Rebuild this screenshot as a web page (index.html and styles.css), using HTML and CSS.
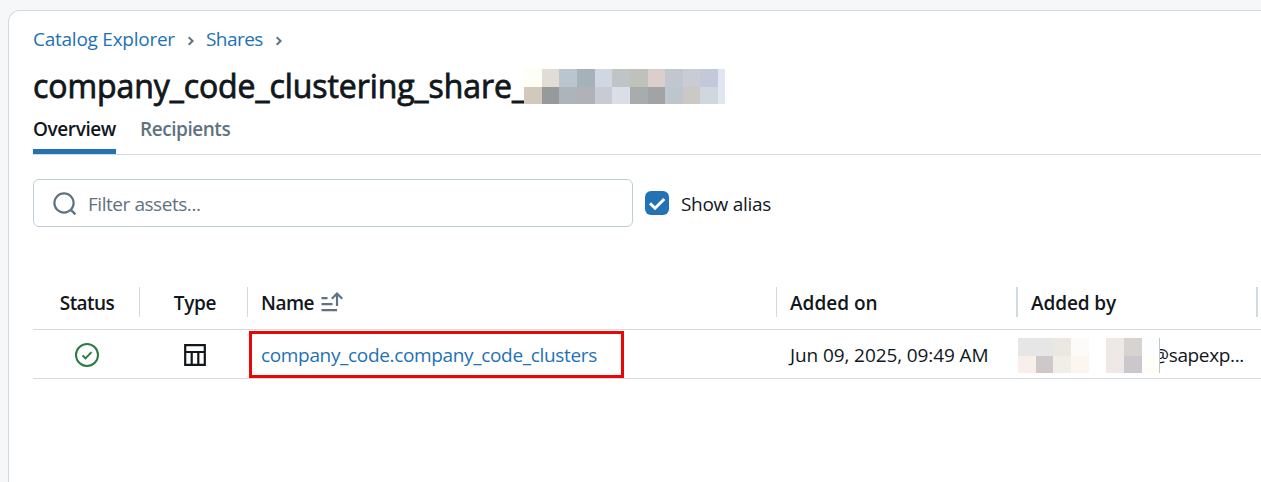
FILE: index.html
```html
<!DOCTYPE html>
<html lang="en">
<head>
<meta charset="utf-8">
<title>Catalog Explorer</title>
<link rel="stylesheet" href="styles.css">
</head>
<body>
<main class="panel">
  <nav class="crumbs">
    <a class="crumb-root">Catalog Explorer</a>
    <svg class="chev" width="8" height="10" viewBox="0 0 8 10"><path d="M1.7 1.2 5.6 5 1.7 8.8"/></svg>
    <a class="crumb-shares">Shares</a>
    <svg class="chev" width="8" height="10" viewBox="0 0 8 10"><path d="M1.7 1.2 5.6 5 1.7 8.8"/></svg>
  </nav>
  <header class="title-row">
    <h1>company_code_clustering_share_</h1>
    <div class="mosaic mosaic-title">
      <i class="c1"></i><i class="c2"></i><i class="c3"></i><i class="c4"></i><i class="c5"></i><i class="c6"></i><i class="c7"></i><i class="c8"></i><i class="c9"></i><i class="c10"></i><i class="c11"></i><i class="c12"></i>
      <i class="d1"></i><i class="d2"></i><i class="d3"></i><i class="d4"></i><i class="d5"></i><i class="d6"></i><i class="d7"></i><i class="d8"></i><i class="d9"></i><i class="d10"></i><i class="d11"></i><i class="c12"></i>
    </div>
  </header>
  <div class="tabs">
    <div class="tab active"><span>Overview</span></div>
    <div class="tab recipients"><span>Recipients</span></div>
  </div>
  <div class="filters">
    <div class="search">
      <svg width="26" height="26" viewBox="0 0 26 26"><circle cx="12" cy="12" r="9.6"/><path d="m18.6 18.6 4.8 4.8"/></svg>
      <span class="placeholder">Filter assets...</span>
    </div>
    <div class="checkbox"><svg width="24" height="24" viewBox="0 0 24 24"><path d="m5 12.2 5 5L19.3 8"/></svg></div>
    <span class="alias">Show alias</span>
  </div>
  <section class="table">
    <div class="row head">
      <div class="cell center"><span class="h-status">Status</span></div>
      <div class="cell center"><span class="h-type">Type</span></div>
      <div class="cell name"><span class="h-name">Name</span>
        <svg class="sort" width="24" height="20" viewBox="0 0 24 20"><path d="M1.5 6.2h6M1.5 12.2h11M1.5 18.2h15.5M17 14V2M11.8 6.7 17 1.5l5.2 5.2"/></svg>
      </div>
      <div class="cell"><span class="h-on">Added on</span></div>
      <div class="cell"><span class="h-by">Added by</span></div>
      <div class="cell"></div>
    </div>
    <div class="row body">
      <div class="cell center"><svg class="ok" width="26" height="26" viewBox="0 0 26 26"><circle cx="13" cy="13" r="11"/><path d="m8.5 13.4 3 3 6-6.3"/></svg></div>
      <div class="cell center type"><svg class="grid" width="22" height="22" viewBox="0 0 22 22"><path d="M1.2 1.2h19.6v19.6H1.2zM1.2 8h19.6M7.7 8v12.8M14.3 8v12.8"/></svg></div>
      <div class="cell name"><a class="asset">company_code.company_code_clusters</a><div class="highlight"></div></div>
      <div class="cell"><span class="date">Jun 09, 2025, 09:49 AM</span></div>
      <div class="cell user">
        <div class="mosaic mosaic-user">
          <i class="u1"></i><i class="u1"></i><i class="u3"></i><i class="u4"></i><i></i><i class="u5"></i><i class="u6"></i><i class="u7"></i>
          <i class="v1"></i><i class="v2"></i><i class="v3"></i><i class="v4"></i><i></i><i class="u5"></i><i class="v6"></i><i class="v7"></i>
        </div>
        <span class="mail">@sapexp...</span>
      </div>
    </div>
  </section>
</main>
</body>
</html>
```
FILE: styles.css
```css
* { box-sizing: border-box; }
body {
  margin: 0;
  padding: 10px 0 0 8px;
  height: 482px;
  overflow: hidden;
  background: #f6f7f9;
  color: #11171c;
  font: 19px/26px "Open Sans", "Noto Sans", sans-serif;
}
h1 { margin: 0; }
span, a, h1 { white-space: nowrap; }
svg { display: block; flex: none; fill: none; }
.panel {
  height: 490px;
  border: 1px solid #d1d9e1;
  border-right: 0;
  border-radius: 12px 0 0 0;
  background: #fff;
  padding: 15px 0 0 24px;
}
.crumbs { display: flex; height: 26px; align-items: center; color: #2272b4; }
.crumb-root { width: 142px; letter-spacing: -0.25px; }
.crumb-shares { width: 57px; letter-spacing: -0.55px; }
.chev { margin: 3px 11px 0 12px; stroke: #5f7281; stroke-width: 2; }
.title-row { display: flex; height: 35px; margin-top: 17px; }
h1 {
  width: 491px; font-size: 32px; line-height: 33px; font-weight: 400;
  letter-spacing: -0.07px;
  -webkit-text-stroke: 0.8px #11171c;
}
.mosaic { display: grid; flex: none; grid-template-rows: 18px 17px; }
.mosaic-title { grid-template-columns: 18px 17px 18px 18px 17px 18px 18px 17px 18px 17px 18px 7px; }
.c1 { background: #fdfef5; } .c2 { background: #e2dcd6; } .c3 { background: #b9c6cf; }
.c4 { background: #a5b2ba; } .c5 { background: #d0d7e2; } .c6 { background: #bfc4c6; }
.c7 { background: #bfc1bb; } .c8 { background: #dacfcd; } .c9 { background: #c1c6cf; }
.c10 { background: #caccd5; } .c11 { background: #c3c9d8; } .c12 { background: #dfe6f0; }
.d1 { background: #d3c8bc; } .d2 { background: #98999a; } .d3 { background: #adb5bb; }
.d4 { background: #b1b2b8; } .d5 { background: #c8cbd5; } .d6 { background: #dadfe7; }
.d7 { background: #a8acad; } .d8 { background: #a2a3a4; } .d9 { background: #bec6cd; }
.d10 { background: #ccc8c5; } .d11 { background: #d0d7df; }
.tabs { display: flex; gap: 24px; height: 51px; border-bottom: 1px solid #d1d9e1; font-weight: 600; }
.tab { height: 50px; padding-top: 12px; color: #5f7281; }
.active { width: 83px; color: #11171c; border-bottom: 5px solid #2272b4; letter-spacing: -0.4px; }
.recipients { letter-spacing: -0.45px; }
.filters { display: flex; align-items: center; margin-top: 24px; height: 48px; }
.search {
  display: flex; align-items: center; width: 600px; height: 48px;
  border: 1px solid #c0cdd8; border-radius: 6px; padding-left: 18px; gap: 10px; color: #5f7281;
}
.search svg { stroke: #5f7281; stroke-width: 2.2; margin-top: 1px; }
.placeholder { padding-top: 2px; letter-spacing: -0.45px; }
.checkbox { width: 24px; height: 24px; margin: 0 12px; border-radius: 6px; background: #2272b4; }
.checkbox svg { stroke: #fff; stroke-width: 3; }
.alias { padding-top: 2px; letter-spacing: -0.3px; }
.table { margin-top: 48px; }
.row { display: grid; grid-template-columns: 107px 108px 529px 241px 240px 10px; border-bottom: 1px solid #d1d9e1; }
.head { height: 55px; padding: 12px 0; font-weight: 600; }
.body { height: 49px; padding-top: 1px; }
.cell { display: flex; align-items: center; padding-left: 13px; }
.center { justify-content: center; padding: 0; }
.head .cell { border-right: 1px solid #d1d9e1; height: 30px; }
.head .cell:nth-child(4), .head .cell:nth-child(5) { border-right-width: 2px; }
.head .cell:last-child { border: 0; }
.head span { padding-top: 2px; }
.head .name { gap: 6px; }
.h-status { letter-spacing: -0.55px; margin-left: 2px; }
.h-type { letter-spacing: -0.3px; margin-left: 3px; }
.h-name { letter-spacing: -0.5px; }
.h-by { letter-spacing: -0.1px; }
.sort { stroke: #5f7281; stroke-width: 2.2; }
.ok { stroke: #277c43; stroke-width: 2; }
.type { padding-left: 1px; }
.grid { stroke: #11171c; stroke-width: 2.2; }
.name { position: relative; }
.asset { color: #2272b4; letter-spacing: -0.34px; }
.highlight { position: absolute; left: 1px; top: 0; width: 375px; height: 47px; border: 3px solid #eb0505; }
.date { letter-spacing: -0.1px; }
.user { padding: 0; }
.mosaic-user { position: relative; z-index: 1; margin-top: 1px; grid-template-columns: 18px 17px 18px 18px 17px 18px 18px 17px; border-right: 1px solid #c0c4c7; }
.u1 { background: #e5e6e5; } .u3 { background: #ebe8e3; } .u4 { background: #fdfbf7; }
.u5 { background: #eee9e6; } .u6 { background: #d7d3cf; } .u7 { background: #fdfeff; }
.v1 { background: #f8efea; } .v2 { background: #cec8cb; } .v3 { background: #f1eee7; }
.v4 { background: #fbf6ef; } .v6 { background: #cbc7cd; } .v7 { background: #fffff7; }
.mail { margin-left: -8px; letter-spacing: -0.35px; }
```
